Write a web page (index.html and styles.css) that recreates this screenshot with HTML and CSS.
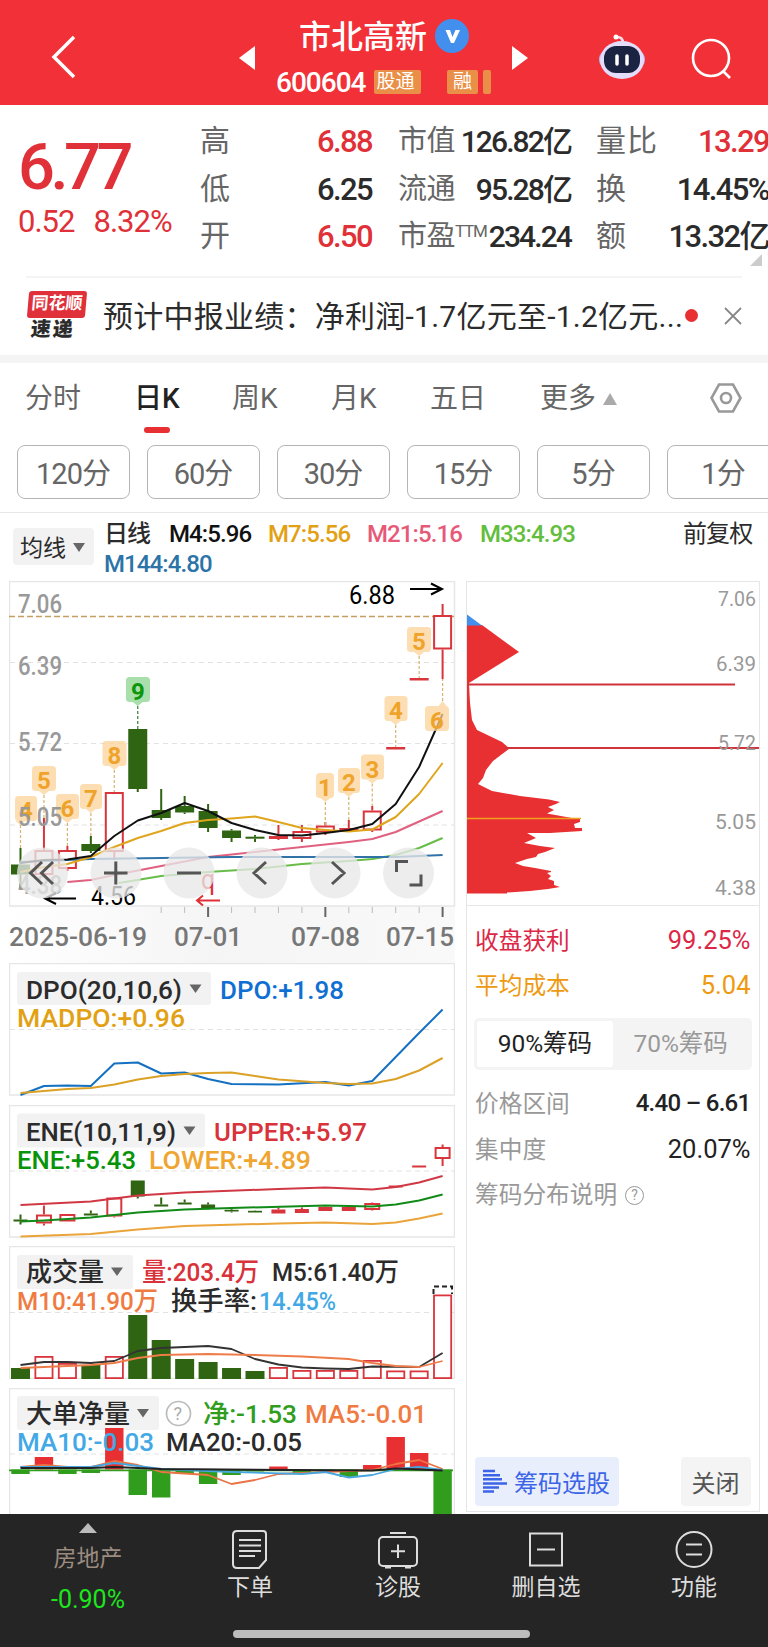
FILE: index.html
```html
<!DOCTYPE html>
<html lang="zh-CN">
<head>
    <meta charset="UTF-8">
    <meta name="viewport" content="width=device-width, initial-scale=1.0">
    <title>市北高新 600604</title>
    <link rel="stylesheet" href="styles.css">
</head>
<body>
    <header class="header">
        <svg class="back" width="28" height="44" viewBox="0 0 28 44"><path d="M24 2 4 22 24 42"/></svg>
        <svg class="prev" width="16" height="24" viewBox="0 0 16 24"><path d="M16 0V24L0 12Z"/></svg>
        <div class="stock">
            <div class="stock-name">市北高新<svg width="34" height="34" viewBox="0 0 34 34"><circle cx="17" cy="17" r="17" fill="#438fee"/><path d="M10.500 11H15L17.500 18 20.500 11H25L19 24H16Z" fill="#fff"/></svg></div>
            <div class="stock-code"><span>600604</span><i class="tag first">股通</i><i class="tag rong">融</i><i class="tag cut"></i></div>
        </div>
        <svg class="next" width="16" height="24" viewBox="0 0 16 24"><path d="M0 0V24L16 12Z"/></svg>
        <svg class="robot" width="48" height="46" viewBox="0 0 48 46">
            <path d="M25 9Q25 3 19 3" fill="none" stroke="#f6dbe8" stroke-width="2.500"/>
            <circle cx="18" cy="3" r="2.500" fill="#fff"/>
            <rect x="1" y="17" width="46" height="17" rx="8" fill="#b9b5ee"/>
            <ellipse cx="24" cy="26" rx="22" ry="19" fill="#e3dcfa"/>
            <rect x="6" y="12" width="36" height="27" rx="12" fill="#1b2342"/>
            <path d="M19 22v8M29 22v8" stroke="#fff" stroke-width="3.500" stroke-linecap="round"/>
        </svg>
        <svg class="search" width="42" height="42" viewBox="0 0 42 42"><circle cx="20" cy="20" r="18"/><path d="M32 33 39 40"/></svg>
    </header>

    <section class="quote">
        <div class="price">
            <div class="last">6.77</div>
            <div class="change"><span>0.52</span><span>8.32%</span></div>
        </div>
        <dl class="facts f1">
            <div><dt>高</dt><dd class="up">6.88</dd></div>
            <div><dt>低</dt><dd>6.25</dd></div>
            <div><dt>开</dt><dd class="up">6.50</dd></div>
        </dl>
        <dl class="facts f2">
            <div><dt>市值</dt><dd>126.82亿</dd></div>
            <div><dt>流通</dt><dd>95.28亿</dd></div>
            <div><dt>市盈<sup>TTM</sup></dt><dd>234.24</dd></div>
        </dl>
        <dl class="facts f3">
            <div><dt>量比</dt><dd class="up">13.29</dd></div>
            <div><dt>换</dt><dd>14.45%</dd></div>
            <div><dt>额</dt><dd>13.32亿</dd></div>
        </dl>
        <i class="corner"></i>
    </section>

    <section class="news">
        <div class="news-logo"><b>同花顺</b><em>速递</em></div>
        <p>预计中报业绩：净利润-1.7亿元至-1.2亿元...</p>
        <i class="dot"></i>
        <svg width="18" height="18" viewBox="0 0 18 18"><path d="M1 1 17 17M17 1 1 17" stroke="#888" stroke-width="1.800"/></svg>
    </section>

    <nav class="tabs">
        <a>分时</a><a class="active">日K</a><a>周K</a><a>月K</a><a>五日</a><a class="more">更多</a>
        <svg width="32" height="32" viewBox="0 0 32 32"><path d="M9 2.500H23L30.500 16 23 29.500H9L1.500 16Z"/><circle cx="16" cy="16" r="5"/></svg>
    </nav>
    <div class="periods">
        <button>120分</button><button>60分</button><button>30分</button><button>15分</button><button>5分</button><button>1分</button>
    </div>

    <div class="ma-bar">
        <button class="select">均线</button>
        <div class="ma-list">
            <span class="ma-title">日线</span><span class="m4">M4:5.96</span><span class="m7">M7:5.56</span><span class="m21">M21:5.16</span><span class="m33">M33:4.93</span><br>
            <span class="m144">M144:4.80</span>
        </div>
        <span class="adjust">前复权</span>
    </div>

    <main class="board">
        <div class="left">
            <!-- every chart keeps page units in its viewBox, so candles line up across panels -->
            <svg class="chart" width="450" height="382" viewBox="9 581 450 382">
                <defs>
                    <linearGradient id="shade" x1="0" x2="1">
                        <stop offset="0" stop-color="#fff"/><stop offset=".45" stop-color="#f5f5f5"/><stop offset="1" stop-color="#f9f9f9"/>
                    </linearGradient>
                </defs>
                <rect x="9" y="906" width="446" height="57" fill="url(#shade)"/>
                <rect class="frame" x="9.500" y="581.500" width="445" height="324.500"/>
                <path class="grid" d="M10 662.500H454M10 743.500H454M10 825H454"/>
                <path class="now-line" d="M9 616.500H454"/>
                <g id="kline"></g>
                <g id="marks"></g>
                <g class="axis">
                    <text x="18" y="612.500" textLength="44">7.06</text>
                    <text x="18" y="675" textLength="44">6.39</text>
                    <text x="18" y="750.500" textLength="44">5.72</text>
                    <text x="18" y="825.500" textLength="44">5.05</text>
                    <text x="18" y="894" textLength="44">4.38</text>
                </g>
                <g class="peak">
                    <text x="349" y="604" textLength="46">6.88</text>
                    <path d="M410 589H442M431 583.500 442 589 431 594.500"/>
                    <text x="91" y="905" textLength="45">4.56</text>
                    <path d="M76 898.500H45M56 893 45 898.500 56 904"/>
                </g>
                <g class="q-mark">
                    <text x="201" y="889" textLength="14">q</text>
                    <path d="M220 900.500H197M203 895.500 197 900.500 203 905.500"/>
                </g>
                <g class="tools">
                    <circle cx="42.500" cy="873" r="25.500"/><circle cx="116" cy="873" r="25.500"/><circle cx="189" cy="873" r="25.500"/>
                    <circle cx="262" cy="873" r="25.500"/><circle cx="335" cy="873" r="25.500"/><circle cx="408.500" cy="873" r="25.500"/>
                    <path d="M42 862 30.500 873 42 884M53 862 41.500 873 53 884M104 873H127.500M115.800 861.500V884.500M177 873H201M266 862 254 873 266 884M332 862 344 873 332 884M396.500 872V861.500H408M421 874.500V885H409.500"/>
                </g>
                <g id="ticks"></g>
                <g class="dates">
                    <text x="9" y="945.500" textLength="138">2025-06-19</text>
                    <text x="174" y="945.500" textLength="68">07-01</text>
                    <text x="291" y="945.500" textLength="69">07-08</text>
                    <text x="386" y="945.500" textLength="68">07-15</text>
                </g>
            </svg>

            <svg class="chart" width="446" height="133" viewBox="9 963 446 133">
                <rect class="frame" x="9.500" y="963.500" width="445" height="131.500"/>
                <path class="grid" d="M10 1029.500H454"/>
                <rect class="chip" x="17" y="972" width="194" height="33" rx="3"/>
                <path class="arrow" d="M189.500 984.500H201.500L195.500 993Z"/>
                <g class="legend">
                    <text x="26" y="998.500" textLength="156">DPO(20,10,6)</text>
                    <text x="220" y="998.500" textLength="124" fill="#0f6fd2">DPO:+1.98</text>
                    <text x="17" y="1026.500" textLength="168" fill="#e2a114">MADPO:+0.96</text>
                </g>
                <g id="dpo"></g>
            </svg>

            <svg class="chart gap" width="446" height="133" viewBox="9 1104.500 446 133">
                <rect class="frame" x="9.500" y="1105" width="445" height="131.500"/>
                <path class="grid" d="M10 1170.500H454"/>
                <rect class="chip" x="17" y="1113" width="188" height="34" rx="3"/>
                <path class="arrow" d="M183.500 1126H195.500L189.500 1134.500Z"/>
                <g class="legend">
                    <text x="26" y="1140" textLength="150">ENE(10,11,9)</text>
                    <text x="214" y="1140" textLength="153" fill="#d8323a">UPPER:+5.97</text>
                    <text x="17" y="1168" textLength="119" fill="#089408">ENE:+5.43</text>
                    <text x="149" y="1168" textLength="162" fill="#f0a530">LOWER:+4.89</text>
                </g>
                <g id="ene"></g>
            </svg>

            <svg class="chart gap" width="446" height="133" viewBox="9 1246 446 133">
                <rect class="frame" x="9.500" y="1246.500" width="445" height="132"/>
                <path class="grid" d="M10 1312.500H454"/>
                <rect class="chip" x="17" y="1255" width="116" height="34" rx="3"/>
                <path class="arrow" d="M111 1267.500H123L117 1276Z"/>
                <g id="vol"></g>
                <path d="M433.500 1294V1286.500H452V1294" fill="none" stroke="#222" stroke-width="2" stroke-dasharray="5 3"/>
                <g class="legend">
                    <text x="26" y="1281" textLength="78">成交量</text>
                    <text x="142" y="1281" textLength="117" fill="#d8323a">量:203.4万</text>
                    <text x="272" y="1281" textLength="127">M5:61.40万</text>
                    <text x="17" y="1309.500" textLength="141" fill="#f07b42">M10:41.90万</text>
                    <text x="171" y="1309.500" textLength="86">换手率:</text>
                    <text x="259" y="1309.500" textLength="77" fill="#42a9e6">14.45%</text>
                </g>
            </svg>

            <svg class="chart gap" width="446" height="126" viewBox="9 1388 446 126">
                <path class="frame" d="M9.500 1514V1388.500H454.500V1514"/>
                <path class="grid" d="M10 1454H454"/>
                <rect class="chip" x="17" y="1396" width="142" height="34" rx="3"/>
                <path class="arrow" d="M137 1409H149L143 1417.500Z"/>
                <circle cx="178.500" cy="1413.500" r="12" fill="none" stroke="#bbb" stroke-width="1.700"/>
                <text x="173.500" y="1420" class="ask">?</text>
                <g id="net"></g>
                <g class="legend">
                    <text x="26" y="1423" textLength="104">大单净量</text>
                    <text x="203" y="1423" textLength="94" fill="#319d1d">净:-1.53</text>
                    <text x="305" y="1423" textLength="122" fill="#f07b42">MA5:-0.01</text>
                    <text x="17" y="1451" textLength="137" fill="#42a9e6">MA10:-0.03</text>
                    <text x="166" y="1451" textLength="136">MA20:-0.05</text>
                </g>
            </svg>
        </div>

        <aside class="chips">
            <svg class="profile" width="292" height="323" viewBox="467 582 292 323">
                <path fill="#e83032" d="M467 625H482L519 652 469 683 470 703 472 720 477 730 502 742 509.500 748.500 493 761 486 770 483 778 478 784 492 791 520 796 549 799.500 560 802 556 804 548 807 554 810 547 813.500 572 818H580V822L574 824 575 828H582V831L550 833H527L536 838 524 843 540 846 555 848 545 852 538 854 536 857 527 859 515 863 523 866 535 868 551 871V872L547 873 551 876 548 879 554 881V885L560 887 548 889 530 891 507 892.500V893.500H467Z"/>
                <path fill="#438fee" d="M467 614.500 482 625.500H467Z"/>
                <path stroke="#d0333a" stroke-width="2" d="M468 684.500H735M505 748H759"/>
                <path stroke="#f0a020" stroke-width="1.500" d="M467 818.500H581"/>
                <g class="axis small">
                    <text x="718" y="606" textLength="38">7.06</text>
                    <text x="716" y="671" textLength="40">6.39</text>
                    <text x="718" y="750" textLength="38">5.72</text>
                    <text x="715" y="829" textLength="41">5.05</text>
                    <text x="715" y="895" textLength="41">4.38</text>
                </g>
            </svg>
            <div class="stats">
                <div class="row win"><span>收盘获利</span><b>99.25%</b></div>
                <div class="row cost"><span>平均成本</span><b>5.04</b></div>
                <div class="seg"><span class="on">90%筹码</span><span>70%筹码</span></div>
                <div class="row"><span>价格区间</span><b class="range">4.40 – 6.61</b></div>
                <div class="row"><span>集中度</span><b>20.07%</b></div>
                <div class="row"><span>筹码分布说明<i class="help">?</i></span></div>
            </div>
            <div class="actions">
                <button class="pick"><svg width="24" height="25" viewBox="0 0 24 25"><path d="M0 2H12M0 6.200H17M0 10.300H19M0 14.400H24M0 18.500H16M0 22.600H11" stroke="#3b64e6" stroke-width="2.500"/></svg>筹码选股</button>
                <button class="close">关闭</button>
            </div>
        </aside>
    </main>

    <footer class="bottom">
        <div class="bar">
            <div class="sector"><i></i><span>房地产</span><b>-0.90%</b></div>
            <a><svg width="42" height="40" viewBox="0 0 42 40"><path d="M8 2H34Q37 2 37 5V31L30 39H8Q4 39 4 35V6Q4 2 8 2ZM10 11H32M10 16.500H32M10 22H32M10 27H26"/></svg>下单</a>
            <a><svg width="42" height="40" viewBox="0 0 42 40"><rect x="2" y="8" width="38" height="29" rx="4"/><path d="M13 4H29M21 15.500V29M14 22.300H28M8 38.500H14M28 38.500H34"/></svg>诊股</a>
            <a><svg width="42" height="40" viewBox="0 0 42 40"><rect x="5" y="4.500" width="32" height="32"/><path d="M12 20.500H30"/></svg>删自选</a>
            <a><svg width="42" height="40" viewBox="0 0 42 40"><circle cx="21" cy="20.500" r="17.500"/><path d="M13 15.500H29M13 25.500H29"/></svg>功能</a>
        </div>
        <div class="home"></div>
    </footer>

    <script>
        const RED = "#d8363c";
        const GREEN = "#2f6412";
        const cx = i => 20.5 + i * 23.45;

        function line(points, color, width = 2) {
            const d = points.map(p => cx(p[0]).toFixed(1) + "," + p[1]).join(" ");
            return `<polyline points="${d}" fill="none" stroke="${color}" stroke-width="${width}" stroke-linejoin="round"/>`;
        }

        // candle: [index, high, bodyTop, bodyBottom, low, type]  g = down, h = hollow up, r = filled up
        function candle([i, high, top, bottom, low, type], w, sw) {
            const x = cx(i);
            const color = type === "g" ? GREEN : RED;
            const wick = `<path d="M${x} ${high}V${top}M${x} ${bottom}V${low}" stroke="${color}" stroke-width="${sw}"/>`;
            if (type === "h") {
                return wick + `<rect x="${x - w / 2 + sw / 2}" y="${top + sw / 2}" width="${w - sw}" height="${bottom - top - sw}" fill="#fff" stroke="${color}" stroke-width="${sw}"/>`;
            }
            return wick + `<rect x="${x - w / 2}" y="${top}" width="${w}" height="${bottom - top}" fill="${color}"/>`;
        }

        function draw(id, html) {
            document.getElementById(id).innerHTML = html;
        }

        const kCandles = [
            [0, 848, 864.5, 874.5, 889, "g"], [1, 818, 850, 875, 875, "h"], [2, 846, 850, 869, 871, "h"],
            [3, 836, 844, 851, 853, "g"], [4, 792, 792, 852, 860, "h"], [5, 729, 729, 789, 792, "g"],
            [6, 789, 810, 818, 820, "g"], [7, 796, 806, 812.5, 814, "g"], [8, 804, 811, 828, 832, "g"],
            [9, 829, 830.5, 838, 842, "g"], [10, 835, 836.7, 838.7, 842, "g"], [11, 825, 836, 839, 840, "r"],
            [12, 825, 831, 839, 842, "h"], [13, 822, 825.5, 832.5, 835, "h"], [14, 820, 828, 831, 831, "r"],
            [15, 806, 810.5, 830.5, 832, "h"], [16, 747, 747, 749.5, 749.5, "r"], [17, 678, 678, 680.5, 680.5, "r"],
            [18, 604, 615, 649.5, 679, "h"]
        ];
        draw("kline", kCandles.map(c => candle(c, 19, 2)).join("") +
            line([[2, 882], [3, 880], [4, 875], [6, 866], [8, 857], [10, 852], [12, 847], [14, 842], [15, 839], [16, 832], [18, 811]], "#e0607f") +
            line([[4.2, 883], [6, 876], [8, 872], [10, 869], [12, 864], [14, 861], [15, 859], [16, 855], [17, 848], [18, 838]], "#67bd47") +
            line([[0, 862], [3, 859], [9, 857], [16, 857], [18, 855]], "#3173a8") +
            line([[0, 872], [1, 867], [2, 864], [3, 857], [4, 847], [5, 838], [6, 831], [7, 823], [8, 820], [9, 818.5], [10, 816.5], [11, 822], [12, 828], [13, 830], [14, 831.5], [15, 829.5], [16, 817], [17, 794], [18, 763]], "#dfa51c") +
            line([[0, 863], [1, 860], [2, 859.5], [3, 856], [4, 836], [5, 820.5], [6, 813], [7, 803], [8, 811], [9, 823], [10, 830], [11, 835], [12, 835.5], [13, 833], [14, 830], [15, 824], [16, 804], [17, 767], [18, 714]], "#111"));

        // sequence marks: [label, x, y, width, candle, end of the dashed stem]
        const marks = [
            ["4", 15, 796, 22, 0, 848], ["5", 32, 766, 24, 1, 818], ["6", 56, 794, 23, 2, 846], ["7", 80, 784, 22, 3, 836],
            ["8", 102.5, 741, 24, 4, 792], ["9", 126, 677, 24, 5, 729], ["1", 316, 773, 18, 13, 825], ["2", 338, 768, 22, 14, 820],
            ["3", 361, 754.5, 23, 15, 806], ["4", 384.5, 696, 23, 16, 747], ["5", 407, 627, 24, 17, 678], ["6", 425, 706, 24, 18, 679]
        ];
        draw("marks", marks.map(([n, x, y, w, i, end]) => {
            const green = n === "9";
            const px = cx(i);
            const below = end < y;
            const tip = below ? `M${px - 4} ${y}L${px} ${y - 5}L${px + 4} ${y}Z` : `M${px - 5} ${y + 25}L${px} ${y + 29}L${px + 5} ${y + 25}Z`;
            return `<path d="M${px} ${below ? y - 5 : y + 29}V${end}" stroke="${green ? "#2f7a3a" : "#d3b470"}" stroke-width="1.2" stroke-dasharray="3 2"/>` +
                `<g class="mark${green ? " nine" : ""}"><rect x="${x}" y="${y}" width="${w}" height="25" rx="3.5"/><path d="${tip}"/>` +
                `<text x="${x + w / 2}" y="${y + 23}">${n}</text></g>`;
        }).join(""));

        let ticks = "";
        for (let i = 6; i < 19; i++) {
            const big = i === 8 || i === 13 || i === 18;
            ticks += `<path d="M${cx(i)} 907V${big ? 917 : 913}" stroke="${big ? "#666" : "#bbb"}" stroke-width="${big ? 2 : 1}"/>`;
        }
        draw("ticks", ticks);

        draw("dpo",
            line([[0, 1095], [1, 1086], [2, 1085.5], [3, 1086], [4, 1063.5], [5, 1062.5], [6, 1073.5], [7, 1072.5], [8, 1079], [9, 1084], [11, 1084.5], [13, 1082], [14, 1085.5], [15, 1081], [16, 1057], [17, 1033], [18, 1009.5]], "#1470c0") +
            line([[0, 1093], [1, 1091], [2, 1089], [3, 1088], [4, 1084.5], [5, 1079.5], [6, 1076], [7, 1074], [8, 1073], [9, 1072.5], [10, 1076], [11, 1079.5], [13, 1083], [14, 1084], [15, 1083.5], [16, 1079], [17, 1070.5], [18, 1058]], "#dba126"));

        const eneCandles = [
            [0, 1214, 1219, 1221, 1224, "g"], [1, 1205, 1214, 1223, 1225, "h"], [2, 1213.5, 1213.5, 1221, 1221, "h"], [3, 1210, 1213, 1215, 1215, "g"],
            [4, 1197, 1197, 1216, 1217, "h"], [5, 1180, 1180, 1196, 1198, "g"], [6, 1197, 1204, 1206, 1206, "g"], [7, 1199, 1202, 1204, 1204, "g"],
            [8, 1202, 1204, 1207.5, 1209, "g"], [9, 1208, 1209.3, 1211, 1212, "g"], [10, 1210, 1210.3, 1212, 1212, "g"], [11, 1207, 1209, 1213, 1213, "r"],
            [12, 1207, 1208.5, 1212.5, 1212.5, "r"], [13, 1206, 1206.5, 1210.5, 1210.5, "r"], [14, 1206, 1206.5, 1210.5, 1210.5, "r"], [15, 1202, 1202.5, 1209.5, 1210, "h"],
            [16, 1185, 1185, 1187, 1187, "r"], [17, 1165, 1165, 1167, 1167, "r"], [18, 1144, 1146.5, 1158.5, 1165.5, "h"]
        ];
        draw("ene", eneCandles.map(c => candle(c, c[5] === "h" ? 16 : 14, 2)).join("") +
            line([[0, 1204.5], [3, 1201], [5, 1195], [7, 1192], [11, 1188.5], [13, 1187], [15, 1189], [16, 1186.5], [17, 1182], [18, 1175.5]], "#cf3844") +
            line([[0, 1221], [1, 1220], [3, 1217], [5, 1212], [7, 1209], [9, 1207.5], [13, 1205], [15, 1206], [16, 1204], [17, 1200], [18, 1194]], "#118a18") +
            line([[0, 1236], [3, 1233.5], [5, 1229], [7, 1225.5], [11, 1223], [13, 1222], [15, 1223.5], [16, 1222], [17, 1218], [18, 1213]], "#eaa43a"));

        const volumes = [
            [1368, "g"], [1356, "h"], [1363, "h"], [1365, "g"], [1356, "h"], [1315, "g"], [1340, "g"], [1359, "g"], [1362, "g"], [1368, "g"],
            [1371, "g"], [1367, "h"], [1370, "h"], [1370, "h"], [1370, "h"], [1360, "h"], [1370.5, "h"], [1370.5, "h"], [1294.5, "h"]
        ];
        draw("vol", volumes.map(([top, type], i) => candle([i, top, top, 1379, 1379, type], 19, 1.8)).join("") +
            line([[0, 1365], [1, 1362], [2, 1362], [3, 1363], [4, 1361], [5, 1351], [6, 1348], [8, 1346], [9, 1349], [10, 1359], [11, 1364.5], [12, 1367.5], [13, 1368.5], [14, 1369], [15, 1366.5], [17, 1367], [18, 1353]], "#333", 1.8) +
            line([[0, 1368], [3, 1365], [4, 1363], [5, 1358], [6, 1355], [8, 1354], [10, 1355], [12, 1356.5], [14, 1359], [15, 1363], [16, 1366], [17, 1367], [18, 1361]], "#ee7c48", 1.8));

        const flows = [1474, 1457, 1474, 1473, 1428, 1495, 1497.5, 1474, 1484, 1475, 1471.5, 1466.5, 1473, 1471, 1477, 1465, 1437, 1453, 1514];
        draw("net", flows.map((v, i) => `<rect x="${cx(i) - 9.2}" y="${Math.min(v, 1469.5)}" width="18.4" height="${Math.abs(v - 1469.5)}" fill="${v < 1469.5 ? "#e83032" : "#319d1d"}"/>`).join("") +
            `<path d="M9 1470.3H453" stroke="#319d1d" stroke-width="1.8"/>` +
            line([[0, 1467], [1, 1465], [2, 1467], [3, 1467], [4, 1461], [5, 1465], [6, 1472], [8, 1475], [9, 1484], [10, 1480], [11, 1474], [12, 1473], [14, 1471], [15, 1470], [16, 1464], [17, 1460], [18, 1469]], "#ea7446", 1.8) +
            line([[0, 1467], [3, 1467], [4, 1463], [5, 1466], [6, 1469], [9, 1472], [12, 1474], [13, 1472], [14, 1477.5], [15, 1475], [16, 1469], [17, 1467], [18, 1470]], "#46a6dd", 1.8) +
            line([[0, 1468], [3, 1468], [4, 1467], [6, 1469], [15, 1470.5], [16, 1468.5], [18, 1470.5]], "#222", 2));

        // squeeze the glyphs too, not only the spacing
        document.querySelectorAll("text[textLength]").forEach(t => t.setAttribute("lengthAdjust", "spacingAndGlyphs"));
    </script>
</body>
</html>
```

FILE: styles.css
```css
* {
    box-sizing: border-box;
}
body {
    margin: 0;
    width: 768px;
    height: 1647px;
    overflow: hidden;
    display: flex;
    flex-direction: column;
    background: #fff;
    color: #2b2b2b;
    font-family: Roboto, "Noto Sans CJK SC", sans-serif;
}
svg {
    display: block;
    flex: none;
}
i, em {
    font-style: normal;
}
button {
    padding: 0;
    border: 0;
    font-family: inherit;
    color: inherit;
}
.up {
    color: #e03038;
}

/* header */
.header {
    height: 105px;
    flex: none;
    display: flex;
    background: #f23037;
    color: #fff;
}
.back {
    margin: 35px 0 0 50px;
    fill: none;
    stroke: #fff;
    stroke-width: 3.5;
}
.prev, .next {
    fill: #fff;
    margin-top: 46px;
}
.prev {
    margin-left: 161px;
}
.stock {
    width: 257px;
    padding-left: 21px;
}
.stock-name {
    display: flex;
    gap: 8px;
    padding: 19px 0 0 23px;
    font-size: 32px;
    line-height: 37px;
    font-weight: 500;
    white-space: nowrap;
}
.stock-code {
    display: flex;
    align-items: center;
    margin-top: 12px;
    height: 28px;
    font-size: 28px;
    font-weight: 500;
    letter-spacing: -1px;
}
.stock-code span {
    width: 98px;
}
.tag {
    height: 24px;
    line-height: 23px;
    background: #ea8f47;
    border-radius: 2px;
    font-size: 19px;
    font-weight: 400;
    letter-spacing: 0;
    text-align: center;
}
.tag.first {
    width: 47px;
    padding-right: 4px;
}
.tag.rong {
    width: 31px;
    margin-left: 26px;
}
.tag.cut {
    width: 8px;
    margin-left: 5px;
}
.robot {
    margin: 34px 0 0 70px;
}
.search {
    margin: 38px 0 0 45px;
    fill: none;
    stroke: #fff;
    stroke-width: 2.6;
}

/* quote */
.quote {
    position: relative;
    height: 171px;
    flex: none;
    display: flex;
    font-size: 31px;
    font-weight: 500;
    letter-spacing: -1.6px;
}
.price {
    width: 200px;
    padding: 28px 0 0 18px;
    color: #e03038;
}
.last {
    font-size: 65px;
    line-height: 68px;
    letter-spacing: -4.5px;
}
.change {
    display: flex;
    gap: 19px;
    margin-top: 1px;
    font-size: 31px;
    line-height: 40px;
    letter-spacing: -1px;
    font-weight: 400;
}
.facts {
    margin: 12px 0 0;
}
.facts div {
    display: flex;
    justify-content: space-between;
    height: 47.6px;
    line-height: 48px;
    white-space: nowrap;
}
.facts dt {
    color: #666;
    font-weight: 400;
    font-size: 30px;
    letter-spacing: 0;
}
.facts dd {
    margin: 1px -1px 0 0;
}
.facts sup {
    font-size: 17px;
    line-height: 0;
    vertical-align: 9px;
    letter-spacing: -1.2px;
}
.f1 {
    width: 171px;
}
.f2 {
    width: 172px;
    margin-left: 27px;
}
.f2 dt {
    font-size: 29px;
    letter-spacing: -0.5px;
}
.f2 dd {
    font-size: 30px;
    letter-spacing: -1.9px;
}
.f3 {
    width: 172px;
    margin-left: 26px;
}
.f3 dt {
    letter-spacing: 1px;
}
.corner {
    position: absolute;
    right: 6px;
    bottom: 10px;
    border-left: 12px solid transparent;
    border-bottom: 12px solid #ccc;
}

/* news */
.news {
    height: 87px;
    flex: none;
    display: flex;
    align-items: center;
    position: relative;
    padding-left: 27px;
    border-bottom: 8px solid #f4f4f4;
}
.news::before {
    content: "";
    position: absolute;
    left: 26px;
    right: 26px;
    top: 0;
    border-top: 2px solid #f4f4f4;
}
.news-logo {
    width: 58px;
    text-align: center;
    transform: skewX(-5deg);
}
.news-logo b {
    display: block;
    height: 27px;
    line-height: 25px;
    border-radius: 3px;
    background: #e0303a;
    color: #fff;
    font-size: 17px;
    font-weight: 700;
}
.news-logo em {
    display: block;
    margin-left: -4px;
    font-size: 20px;
    line-height: 23px;
    font-weight: 900;
    letter-spacing: 2px;
}
.news p {
    width: 579px;
    margin: 0 6px 3px 18px;
    font-size: 30px;
    letter-spacing: 0.25px;
    white-space: nowrap;
}
.dot {
    width: 13px;
    height: 13px;
    margin-left: -3px;
    margin-right: 26px;
    border-radius: 50%;
    background: #e83032;
}

/* tabs */
.tabs {
    position: relative;
    height: 82px;
    flex: none;
    display: flex;
    padding-left: 25px;
    font-size: 28px;
    line-height: 72px;
    color: #666;
    white-space: nowrap;
}
.tabs a {
    width: 99px;
}
.tabs a:first-child {
    width: 109px;
}
.tabs a.active {
    position: relative;
    width: 98px;
    color: #222;
    font-weight: 500;
}
.active::after {
    content: "";
    position: absolute;
    left: 10px;
    top: 64px;
    width: 26px;
    height: 6px;
    border-radius: 3px;
    background: #e83032;
}
.tabs a:nth-child(5) {
    width: 110px;
}
.tabs .more {
    display: flex;
    align-items: center;
    gap: 7px;
    height: 72px;
    width: 170px;
}
.more::after {
    content: "";
    border: 7px solid transparent;
    border-top: 0;
    border-bottom: 12px solid #aaa;
}
.tabs svg {
    margin-top: 19px;
    fill: none;
    stroke: #999;
    stroke-width: 2.6;
}
.periods {
    display: flex;
    flex: none;
    gap: 17px;
    height: 68px;
    padding-left: 16.5px;
    border-bottom: 1px solid #e8e8e8;
    overflow: hidden;
}
.periods button {
    flex: none;
    width: 113px;
    height: 54px;
    padding-bottom: 3px;
    border: 1.5px solid #b5b5b5;
    border-radius: 8px;
    background: #fff;
    color: #666;
    font-size: 29px;
    letter-spacing: -1px;
}

/* moving averages */
.ma-bar {
    height: 68px;
    flex: none;
    display: flex;
    font-size: 24px;
    font-weight: 500;
    letter-spacing: -0.9px;
}
.select {
    display: flex;
    align-items: center;
    gap: 7px;
    width: 81px;
    height: 37px;
    margin: 15px 0 0 13px;
    padding: 0 0 2px 7px;
    border-radius: 4px;
    background: #f2f2f2;
    font-size: 23px;
    white-space: nowrap;
}
.select::after {
    content: "";
    margin-top: 3px;
    border: 6.5px solid transparent;
    border-bottom: 0;
    border-top: 9px solid #666;
}
.ma-list {
    width: 589px;
    padding: 7px 0 0 10px;
    line-height: 29.5px;
    white-space: nowrap;
}
.ma-list span {
    display: inline-block;
}
.ma-title {
    width: 65px;
    font-size: 24px;
}
.m4 { width: 99px; color: #111; }
.m7 { width: 99px; color: #e2a114; }
.m21 { width: 113px; color: #e65a78; }
.m33 { color: #62be3c; }
.m144 { color: #2c74a8; }
.adjust {
    padding-top: 7px;
    font-size: 24px;
    line-height: 28px;
    font-weight: 400;
}

/* charts */
.board {
    display: flex;
    flex: none;
    height: 933px;
    padding-left: 9px;
    overflow: hidden;
}
.left {
    width: 457px;
}
.chart.gap {
    margin-top: 8.6px;
}
.chart text {
    font-size: 26.5px;
}
.frame {
    fill: none;
    stroke: #e6e6e6;
    stroke-width: 1.5;
}
.grid {
    stroke: #e2e2e2;
    stroke-dasharray: 5 4;
}
.now-line {
    stroke: #c69d62;
    stroke-width: 1.3;
    stroke-dasharray: 6 3;
}
.chart .axis text, .chart .peak text, .chart .dates text {
    font-size: 25.5px;
}
.axis text {
    fill: #999;
    font-weight: 500;
}
.axis.small text {
    font-size: 21px;
    font-weight: 400;
}
.peak path {
    fill: none;
    stroke: #000;
    stroke-width: 2;
}
.chart .q-mark text {
    fill: #e03038;
    font-size: 27px;
}
.q-mark path {
    fill: none;
    stroke: #e03038;
    stroke-width: 2;
}
.mark {
    fill: rgba(252, 211, 153, 0.75);
}
.chart .mark text {
    fill: #f0a32a;
    font-size: 24px;
    font-weight: 700;
    text-anchor: middle;
}
.mark.nine {
    fill: #a9dfab;
}
.chart .nine text {
    fill: #0b960b;
}
.tools circle {
    fill: rgba(232, 232, 232, 0.78);
}
.tools path {
    fill: none;
    stroke: #555;
    stroke-width: 3;
}
.dates text {
    fill: #777;
    font-weight: 500;
}
.chip {
    fill: #f2f2f2;
}
.arrow {
    fill: #666;
}
.legend {
    fill: #2b2b2b;
    font-weight: 500;
}
.chart .ask {
    fill: #aaa;
    font-size: 18px;
}

/* chip distribution */
.chips {
    width: 293.5px;
    height: 931px;
    display: flex;
    flex-direction: column;
    border: 1.5px solid #e6e6e6;
    background: #fff;
}
.stats {
    flex: 1;
    padding: 10px 8px 0;
    border-top: 1.5px solid #e6e6e6;
}
.row {
    display: flex;
    justify-content: space-between;
    align-items: center;
    height: 45.3px;
    color: #999;
    font-size: 23.7px;
}
.row b {
    margin-top: 2px;
    font-size: 25.5px;
    font-weight: 400;
    color: #222;
}
.row b.range {
    font-size: 24px;
    font-weight: 500;
    letter-spacing: -0.7px;
}
.row.win, .win b {
    color: #dc2846;
}
.row.cost, .cost b {
    color: #ee9a10;
}
.seg {
    display: flex;
    height: 52px;
    margin: 11px -1px 10px -1px;
    padding: 3px;
    border-radius: 5px;
    background: #f4f4f4;
    color: #999;
    font-size: 24.5px;
    line-height: 46px;
    text-align: center;
}
.seg span {
    flex: 1;
}
.seg .on {
    background: #fff;
    color: #222;
    border-radius: 3px;
}
.help {
    display: inline-block;
    width: 19px;
    height: 19px;
    margin-left: 8px;
    border: 1.5px solid #999;
    border-radius: 50%;
    font-size: 14px;
    line-height: 17px;
    text-align: center;
    vertical-align: 3px;
}
.actions {
    display: flex;
    justify-content: space-between;
    padding: 0 8px 5px 8px;
}
.actions button {
    height: 49px;
    border-radius: 4px;
    font-size: 24px;
    background: #f4f4f4;
    color: #555;
}
.actions .pick {
    display: flex;
    align-items: center;
    gap: 7px;
    width: 144px;
    padding-left: 8px;
    background: #e9eefd;
    color: #3b64e6;
    white-space: nowrap;
}
.actions .close {
    width: 70px;
}

/* bottom bar */
.bottom {
    flex: 1;
    background: #252525;
}
.bar {
    display: grid;
    grid-template-columns: 176px repeat(4, 148px);
    height: 116px;
    color: #ddd;
    font-size: 23px;
    text-align: center;
}
.bar a {
    display: flex;
    flex-direction: column;
    align-items: center;
    padding-top: 15px;
    line-height: 38px;
}
.bar svg {
    fill: none;
    stroke: #ddd;
    stroke-width: 2;
}
.sector {
    display: flex;
    flex-direction: column;
    align-items: center;
    padding-top: 9px;
    color: #9b8b81;
}
.sector i {
    border: 9px solid transparent;
    border-top: 0;
    border-bottom: 10px solid #bbb;
}
.sector span {
    margin-top: 9px;
    line-height: 34px;
}
.sector b {
    margin-top: 9px;
    font-size: 25px;
    line-height: 30px;
    font-weight: 400;
    color: #1ee61e;
}
.home {
    width: 297px;
    height: 8px;
    margin-left: 233px;
    border-radius: 4px;
    background: #bdbdbd;
}
```
